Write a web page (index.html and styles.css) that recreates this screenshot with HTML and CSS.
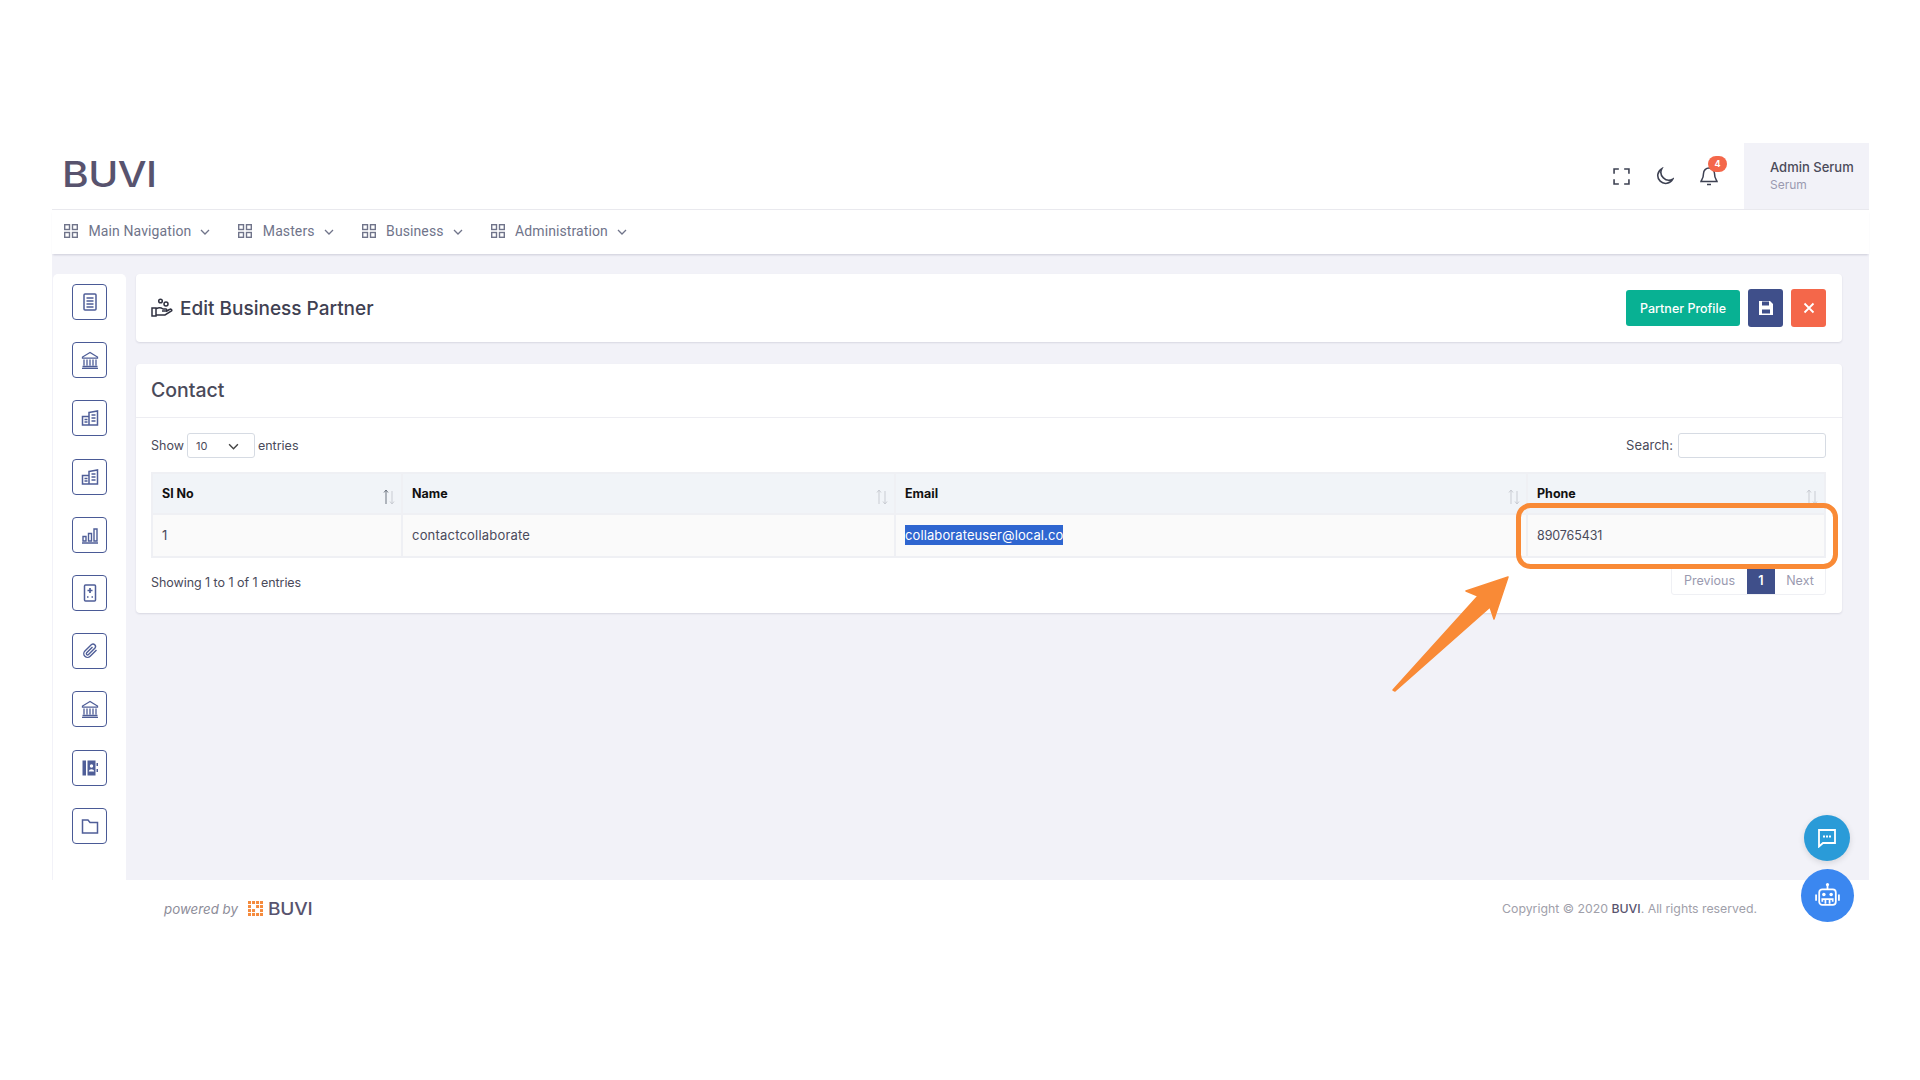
FILE: index.html
```html
<!DOCTYPE html>
<html lang="en">
<head>
<meta charset="utf-8">
<title>Edit Business Partner</title>
<link rel="stylesheet" href="styles.css">
</head>
<body>
<svg class="defs" width="0" height="0" aria-hidden="true">
  <symbol id="grid" viewBox="0 0 14 14"><g fill="none" stroke="currentColor" stroke-width="1.4"><rect x=".7" y=".7" width="4.8" height="4.8"/><rect x="8.5" y=".7" width="4.8" height="4.8"/><rect x=".7" y="8.5" width="4.8" height="4.8"/><rect x="8.5" y="8.5" width="4.8" height="4.8"/></g></symbol>
  <symbol id="chev" viewBox="0 0 10 6"><path d="M1 1l4 4 4-4" fill="none" stroke="currentColor" stroke-width="1.3"/></symbol>
  <symbol id="bank" viewBox="0 0 18 18"><path d="M9 1.5L1.5 6v1.2h15V6zM3 8.5v6M6 8.5v6M9 8.5v6M12 8.5v6M15 8.5v6M1.5 15.5h15M1 17.3h16" fill="none" stroke="currentColor" stroke-width="1.3"/></symbol>
  <symbol id="bld" viewBox="0 0 18 18"><path d="M1.5 7.5h6.5v8.500H1.500zM8 3.500l8.500-1.500v14H8zM3.500 10.500h3M3.500 13h3M10.500 6h4M10.500 9h4M10.500 12h4" fill="none" stroke="currentColor" stroke-width="1.500"/></symbol>
</svg>

<div class="app">
  <header class="topbar">
    <div class="logo-box"><div class="logo">BUVI</div></div>
    <div class="top-actions">
      <svg class="ti full" viewBox="0 0 16 16"><path d="M1 5.500V1h4.500M10.500 1H15v4.500M15 10.500V15h-4.500M5.500 15H1v-4.500" fill="none" stroke="currentColor" stroke-width="1.500"/></svg>
      <svg class="ti moon" viewBox="0 0 18 18"><path d="M6.500 1.500A7.500 7.500 0 1 0 16.800 11.500 7.500 7.500 0 0 1 6.500 1.500z" fill="none" stroke="currentColor" stroke-width="1.500"/></svg>
      <div class="bell">
        <svg class="ti" viewBox="0 0 18 20"><path d="M9 2a5.500 5.500 0 0 0-5.500 5.500c0 5-2 6.500-2.500 8h16c-.5-1.500-2.500-3-2.500-8A5.500 5.500 0 0 0 9 2zM7 18.500h4" fill="none" stroke="currentColor" stroke-width="1.500"/></svg>
        <span class="badge">4</span>
      </div>
    </div>
    <div class="user">
      <div class="user-name">Admin Serum</div>
      <div class="user-role">Serum</div>
    </div>
  </header>

  <nav class="mainnav">
    <a class="nav-item"><svg class="nav-grid"><use href="#grid"/></svg><span>Main Navigation</span><svg class="nav-chev"><use href="#chev"/></svg></a>
    <a class="nav-item"><svg class="nav-grid"><use href="#grid"/></svg><span>Masters</span><svg class="nav-chev"><use href="#chev"/></svg></a>
    <a class="nav-item"><svg class="nav-grid"><use href="#grid"/></svg><span>Business</span><svg class="nav-chev"><use href="#chev"/></svg></a>
    <a class="nav-item"><svg class="nav-grid"><use href="#grid"/></svg><span>Administration</span><svg class="nav-chev"><use href="#chev"/></svg></a>
  </nav>

  <div class="body-row">
    <aside class="side">
      <a class="side-btn"><svg viewBox="0 0 18 18"><rect x="3" y="1" width="12" height="16" rx="1" fill="none" stroke="currentColor" stroke-width="1.500"/><path d="M5.500 5h7M5.500 8h7M5.500 11h7M5.500 14h7" stroke="currentColor" stroke-width="1.300"/></svg></a>
      <a class="side-btn"><svg viewBox="0 0 18 18"><use href="#bank"/></svg></a>
      <a class="side-btn"><svg viewBox="0 0 18 18"><use href="#bld"/></svg></a>
      <a class="side-btn"><svg viewBox="0 0 18 18"><use href="#bld"/></svg></a>
      <a class="side-btn"><svg viewBox="0 0 18 18"><path d="M2 10.500h3v4.500H2zM7.500 7.500h3V15h-3zM13 3h3v12h-3zM1 17h16" fill="none" stroke="currentColor" stroke-width="1.400"/></svg></a>
      <a class="side-btn"><svg viewBox="0 0 18 18"><rect x="3.500" y="1" width="11" height="16" rx="1" fill="none" stroke="currentColor" stroke-width="1.500"/><path d="M9 4v5M6.500 6.500h5" stroke="currentColor" stroke-width="1.700"/><path d="M6 13h1.500M10.500 13H12" stroke="currentColor" stroke-width="1.700"/></svg></a>
      <a class="side-btn"><svg viewBox="0 0 18 18"><path d="M15.500 8l-6.300 6.300a3.700 3.700 0 0 1-5.300-5.300l6.600-6.500a2.500 2.500 0 0 1 3.500 3.500l-6.500 6.500a1.200 1.200 0 0 1-1.800-1.800L11.500 5" fill="none" stroke="currentColor" stroke-width="1.400"/></svg></a>
      <a class="side-btn"><svg viewBox="0 0 18 18"><use href="#bank"/></svg></a>
      <a class="side-btn"><svg viewBox="0 0 18 18"><path d="M1.500 1.500h3.500v15H1.500zM6.500 1.500h8v15h-8z" fill="currentColor"/><circle cx="10.500" cy="7" r="1.700" fill="#fff"/><path d="M7.800 12.500c.3-3 5-3 5.400 0z" fill="#fff"/><path d="M15.500 4h1.500v3h-1.500zM15.500 10h1.500v3h-1.500z" fill="currentColor"/></svg></a>
      <a class="side-btn"><svg viewBox="0 0 18 18"><path d="M1.500 3h5.500l2 2.500h7.500V16h-15z" fill="none" stroke="currentColor" stroke-width="1.500"/></svg></a>
    </aside>

    <main class="content">
      <section class="card title-card">
        <div class="title-left">
          <svg class="hand" viewBox="0 0 22 20"><g fill="none" stroke="#2f3140" stroke-width="1.500"><circle cx="9.500" cy="3" r="1.800"/><circle cx="15" cy="6" r="2"/><path d="M1 10h4v8H1zM5 11c3-2 5-1.500 7 0h3c1 0 1 2 0 2h-4M5 17h9l6.500-4c1-1-.5-2.500-2-1.500L15 13.500"/></g></svg>
          <h1>Edit Business Partner</h1>
        </div>
        <div class="title-actions">
          <button class="btn btn-green">Partner Profile</button>
          <button class="btn btn-icon btn-blue"><svg viewBox="0 0 16 16"><path d="M1 1h11l3 3v11H1z" fill="#fff"/><rect x="4" y="1.500" width="7" height="4" fill="#3f4f8a"/><rect x="4" y="9.500" width="8" height="4" fill="#3f4f8a"/></svg></button>
          <button class="btn btn-icon btn-red"><svg viewBox="0 0 12 12"><path d="M1.500 1.500l9 9M10.500 1.500l-9 9" stroke="#fff" stroke-width="1.800"/></svg></button>
        </div>
      </section>

      <section class="card contact-card">
        <h2 class="contact-head">Contact</h2>
        <div class="contact-body">
          <div class="dt-top">
            <label class="dt-len">Show
              <span class="select-wrap"><select><option>10</option></select><svg><use href="#chev"/></svg></span>
              entries</label>
            <label class="dt-search">Search: <input type="text"></label>
          </div>
          <table class="dt">
            <colgroup><col class="c1"><col class="c2"><col class="c3"><col class="c4"></colgroup>
            <thead>
              <tr>
                <th>Sl No<svg class="sort active" viewBox="0 0 14 18"><path d="M4 16V2M2 4.500L4 2l2 2.500" class="up"/><path d="M10 3v13M8 13.500L10 16l2-2.500"/></svg></th>
                <th>Name<svg class="sort" viewBox="0 0 14 18"><path d="M4 16V2M2 4.500L4 2l2 2.500"/><path d="M10 3v13M8 13.500L10 16l2-2.500"/></svg></th>
                <th>Email<svg class="sort" viewBox="0 0 14 18"><path d="M4 16V2M2 4.500L4 2l2 2.500"/><path d="M10 3v13M8 13.500L10 16l2-2.500"/></svg></th>
                <th>Phone<svg class="sort" viewBox="0 0 14 18"><path d="M4 16V2M2 4.500L4 2l2 2.500"/><path d="M10 3v13M8 13.500L10 16l2-2.500"/></svg></th>
              </tr>
            </thead>
            <tbody>
              <tr>
                <td>1</td>
                <td>contactcollaborate</td>
                <td><span class="selected">collaborateuser@local.co</span></td>
                <td class="num">890765431</td>
              </tr>
            </tbody>
          </table>
          <div class="dt-bottom">
            <div class="dt-info">Showing 1 to 1 of 1 entries</div>
            <div class="pager">
              <a class="pg">Previous</a><a class="pg pg-on">1</a><a class="pg">Next</a>
            </div>
          </div>
        </div>
      </section>
    </main>
  </div>

  <footer class="foot">
    <div class="powered">
      <span class="powered-by">powered by</span>
      <svg class="dots" viewBox="0 0 16 16"><g fill="#f58a3c"><rect x="0" y="0" width="3.200" height="3.200"/><rect x="4.300" y="0" width="3.200" height="3.200"/><rect x="8.600" y="0" width="3.200" height="3.200"/><rect x="12.800" y="0" width="3.200" height="3.200"/><rect x="0" y="4.300" width="3.200" height="3.200"/><rect x="8.600" y="4.300" width="3.200" height="3.200"/><rect x="12.800" y="4.300" width="3.200" height="3.200"/><rect x="0" y="8.600" width="3.200" height="3.200"/><rect x="4.300" y="8.600" width="3.200" height="3.200"/><rect x="12.800" y="8.600" width="3.200" height="3.200"/><rect x="0" y="12.800" width="3.200" height="3.200"/><rect x="4.300" y="12.800" width="3.200" height="3.200"/><rect x="8.600" y="12.800" width="3.200" height="3.200"/><rect x="12.800" y="12.800" width="3.200" height="3.200"/></g></svg>
      <span class="foot-logo">BUVI</span>
    </div>
    <div class="copy">Copyright © 2020 <b>BUVI</b>. All rights reserved.</div>
  </footer>
</div>

<svg class="annot" viewBox="0 0 1920 1080" aria-hidden="true">
  <rect x="1518.500" y="505.500" width="317" height="61" rx="12" fill="none" stroke="#f98a36" stroke-width="5"/>
  <path d="M1508 577L1466 591 1478 596 1393 690 1395 691 1490 607 1494 619z" fill="#f98a36" stroke="#f98a36" stroke-width="1.500" stroke-linejoin="round"/>
</svg>

<a class="fab fab-chat"><svg viewBox="0 0 20 20"><path d="M2 2h16v13H6l-4 3.500z" fill="none" stroke="#fff" stroke-width="1.800"/><path d="M6 8.500h2M9 8.500h2M12 8.500h2" stroke="#fff" stroke-width="1.800"/></svg></a>
<a class="fab fab-bot"><svg viewBox="0 0 26 26"><g fill="none" stroke="#fff" stroke-width="1.700"><rect x="5" y="7" width="16" height="15" rx="3"/><path d="M13 7V3M2 12v6M24 12v6M8 19V16.500h10V19M11 16.500V21M15 16.500V21"/></g><circle cx="13" cy="2.500" r="1.500" fill="#fff"/><circle cx="9.500" cy="12" r="1.700" fill="#fff"/><circle cx="16.500" cy="12" r="1.700" fill="#fff"/></svg></a>
</body>
</html>
```

FILE: styles.css
```css
* { box-sizing: border-box; }
html, body { margin: 0; background: #fff; }
body {
  font-family: Inter, "Open Sans", sans-serif;
  color: #4a4a5a;
  height: 1080px;
  overflow: hidden;
  position: relative;
  padding: 143px 51px 0 52px;
}
.defs { position: absolute; }

.topbar {
  height: 67px;
  display: flex;
  align-items: stretch;
  border-bottom: 1px solid #e9e9ee;
  background: #fff;
}
.logo-box { flex: 1; padding: 9px 0 0 10px; }
.logo {
  display: inline-block;
  font-size: 36px;
  font-weight: 500;
  line-height: 44px;
  letter-spacing: -.5px;
  color: #58536e;
  transform: scaleX(1.13);
  transform-origin: left center;
}
.top-actions {
  display: flex;
  align-items: center;
  gap: 26px;
  margin-right: 26px;
  color: #3d4152;
}
.ti { width: 16px; height: 16px; display: block; }
.full { width: 17px; height: 17px; margin-right: -1px; }
.moon { width: 19px; height: 19px; }
.bell { position: relative; display: flex; }
.bell .ti { width: 18px; height: 20px; }
.badge {
  position: absolute;
  left: 8px;
  top: -10px;
  width: 19px;
  height: 16px;
  border-radius: 8px;
  background: #f4674a;
  color: #fff;
  font-size: 9px;
  font-weight: 700;
  line-height: 16px;
  text-align: center;
}
.user {
  width: 125px;
  background: #f2f2f8;
  padding: 15px 0 0 26px;
}
.user-name { font-size: 13px; font-weight: 500; color: #4a4a5a; line-height: 18px; white-space: nowrap; }
.user-role { font-size: 12px; color: #9a9ab0; line-height: 18px; }

.mainnav {
  height: 44px;
  display: flex;
  align-items: center;
  gap: 28px;
  padding: 0 0 2px 12px;
  background: #fff;
  box-shadow: 0 2px 2px -1px rgba(60, 60, 90, .2);
  position: relative;
  color: #70748a;
}
.nav-item {
  display: flex;
  align-items: center;
  font-family: Roboto, sans-serif;
  font-size: 14px;
  letter-spacing: .1px;
}
.nav-grid { width: 14px; height: 14px; margin-right: 10.500px; }
.nav-chev { width: 10px; height: 6px; margin-left: 9px; margin-top: 2px; }

.body-row {
  height: 626px;
  display: flex;
  background: #f2f2f8;
}
.side {
  flex: none;
  width: 73px;
  margin-top: 20px;
  margin-left: 1px;
  padding: 10px 0 0 19px;
  background: #fff;
  border-radius: 5px 5px 0 0;
  display: flex;
  flex-direction: column;
  gap: 22.200px;
}
.side-btn {
  width: 35px;
  height: 36px;
  border: 1px solid #4a5a96;
  border-radius: 4px;
  display: flex;
  align-items: center;
  justify-content: center;
  color: #4f5e98;
}
.side-btn svg { width: 18px; height: 18px; display: block; }

.content { flex: 1; min-width: 0; padding: 20px 27px 0 10px; display: flex; flex-direction: column; gap: 22px; }
.card { background: #fff; border-radius: 4px; box-shadow: 0 1px 2px rgba(60, 60, 90, .14); }
.title-card {
  height: 68px;
  display: flex;
  align-items: center;
  justify-content: space-between;
  padding: 0 16px 0 15px;
}
.title-left { display: flex; align-items: center; gap: 7px; }
.hand { width: 22px; height: 20px; }
h1 { margin: 0; font-size: 19px; font-weight: 500; color: #3f4152; white-space: nowrap; }
.title-actions { display: flex; align-items: center; gap: 8px; }
.btn { border: 0; padding: 0; font-family: inherit; border-radius: 3px; color: #fff; display: flex; align-items: center; justify-content: center; }
.btn-green { width: 114px; height: 36px; background: #08b193; font-size: 12.500px; font-weight: 500; }
.btn-icon { width: 35px; height: 38px; }
.btn-icon svg { width: 16px; height: 16px; }
.btn-blue { background: #3f4f8a; }
.btn-red { background: #f4674a; }
.btn-red svg { width: 12px; height: 12px; }

.contact-card { height: 249px; }
.contact-head {
  margin: 0;
  height: 54px;
  padding-left: 15px;
  font-size: 19.500px;
  font-weight: 500;
  line-height: 53px;
  color: #4a4a5a;
  border-bottom: 1px solid #ededf2;
}
.contact-body { padding: 15px 16px 0 15px; }
.dt-top {
  display: flex;
  justify-content: space-between;
  align-items: center;
  height: 25px;
  font-size: 12.500px;
  color: #4a4a5a;
}
.dt-len { display: flex; align-items: center; gap: 3px; }
.select-wrap { position: relative; display: block; width: 68px; height: 25px; }
.select-wrap select {
  appearance: none;
  width: 100%;
  height: 100%;
  border: 1px solid #d6dbe3;
  border-radius: 3px;
  background: #fff;
  padding-left: 8px;
  font: 11px Inter, sans-serif;
  color: #4a4a5a;
}
.select-wrap svg { position: absolute; right: 16px; top: 10px; width: 11px; height: 7px; color: #444; }
.dt-search { display: flex; align-items: center; gap: 5px; font-size: 13px; padding-bottom: 1px; }
.dt-search input { width: 148px; height: 25px; margin-bottom: -1px; border: 1px solid #d6dbe3; border-radius: 3px; background: #fff; }

.dt {
  margin-top: 14px;
  width: 1675px;
  table-layout: fixed;
  border-collapse: collapse;
  font-size: 13px;
  letter-spacing: .2px;
}
.c1 { width: 250px; }
.c2 { width: 493px; }
.c3 { width: 632px; }
.c4 { width: 298px; }
.dt th, .dt td { border: 2px solid #eff0f4; padding: 0 9px; text-align: left; }
.dt th {
  height: 41px;
  background: #f1f4f8;
  color: #111;
  font-weight: 700;
  font-size: 12.500px;
  letter-spacing: 0;
  position: relative;
  padding-bottom: 1px;
}
.dt td { height: 43px; background: #fafafa; color: #4a4a5a; padding-bottom: 1px; }
.dt td.num { font-size: 12.500px; letter-spacing: -.1px; }
.sort {
  position: absolute;
  right: 5px;
  top: 14px;
  width: 14px;
  height: 18px;
  fill: none;
  stroke: #c9ccd3;
  stroke-width: 1;
}
.sort.active .up { stroke: #6d7480; }
.selected { background: #2f66d0; color: #fff; padding: 2px 0; letter-spacing: .1px; }

.dt-bottom { display: flex; justify-content: space-between; }
.dt-info { font-size: 12.500px; letter-spacing: -.05px; margin-top: 17px; color: #4a4a5a; }
.pager {
  margin-top: 8px;
  height: 29px;
  display: flex;
  font-size: 12.500px;
  border: 1px solid #eff0f4;
  border-radius: 3px;
  color: #9a9ab0;
}
.pg { display: flex; align-items: center; justify-content: center; width: 75px; }
.pg:last-child { width: 50px; }
.pg-on { width: 28px; background: #3f4f8a; color: #fff; font-weight: 600; }

.foot {
  height: 57px;
  display: flex;
  justify-content: space-between;
  align-items: center;
  padding: 0 112px 0 112px;
  background: #fff;
}
.powered { display: flex; align-items: center; }
.powered-by { font-size: 13.300px; font-style: italic; color: #8d8d99; margin-right: 10px; white-space: nowrap; }
.dots { width: 15px; height: 15px; margin-right: 5px; }
.foot-logo { display: inline-block; font-size: 17px; font-weight: 500; letter-spacing: -.2px; color: #58536e; transform: scaleX(1.12); transform-origin: left center; }
.copy { font-size: 12.300px; color: #a0a0aa; white-space: nowrap; }
.copy b { font-weight: 500; color: #58536e; }

.annot { position: absolute; left: 0; top: 0; width: 1920px; height: 1080px; pointer-events: none; }
.fab { position: absolute; border-radius: 50%; display: flex; align-items: center; justify-content: center; }
.fab-chat { left: 1804px; top: 815px; width: 46px; height: 46px; background: #2a9bd8; box-shadow: 0 2px 6px rgba(0, 0, 0, .12); }
.fab-chat svg { width: 20px; height: 20px; }
.fab-bot { left: 1801px; top: 869px; width: 53px; height: 53px; background: #3b87f0; }
.fab-bot svg { width: 27px; height: 27px; }
```
